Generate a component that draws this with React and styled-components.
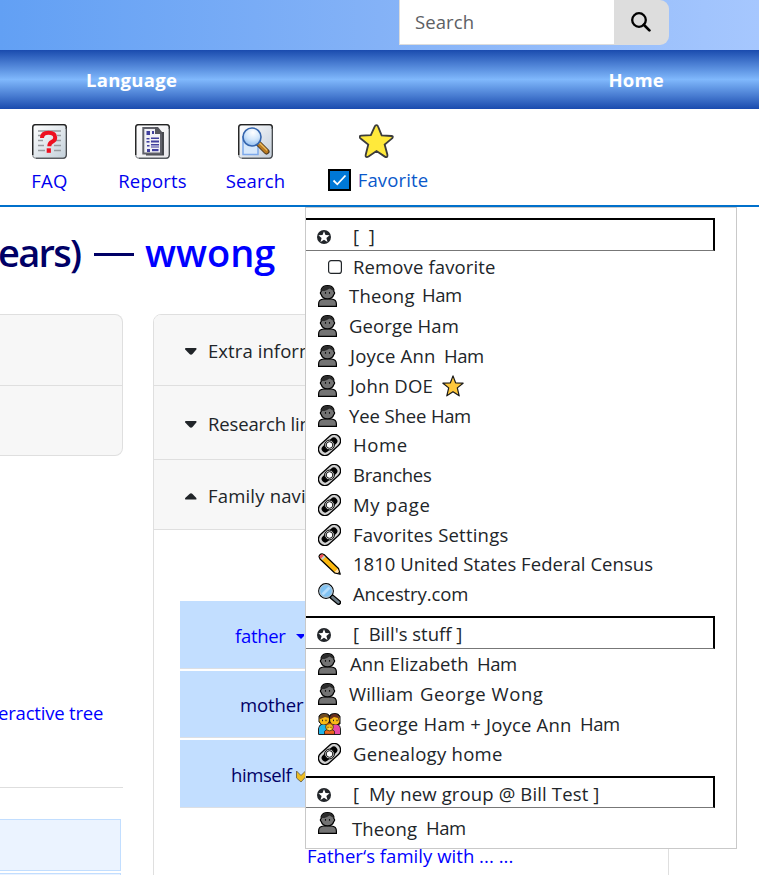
import React from 'react';
import styled, { createGlobalStyle } from 'styled-components';

const GlobalStyle = createGlobalStyle`
  * { box-sizing: border-box; }
  html, body { margin: 0; padding: 0; }
  body {
    height: 875px;
    overflow: hidden;
    background: #fff;
    color: #212529;
    font-family: "Open Sans", "Noto Sans", sans-serif;
    font-size: 18.5px;
    line-height: 28px;
    font-kerning: none;
  }
`;

const Page = styled.div`
  width: 759px;
  height: 875px;
  overflow: hidden;
  display: flex;
  flex-direction: column;
`;

/* ---------- header ---------- */
const Header = styled.header`
  height: 50px;
  flex: none;
  padding-left: 399px;
  background: linear-gradient(90deg, #62a0f4, #84b2f7 50%, #a6c7fe);
`;
const SearchForm = styled.form`
  display: flex;
  width: 270px;
  height: 45px;
`;
const SearchInput = styled.input`
  width: 215px;
  height: 45px;
  padding: 0 0 1px 15px;
  border: 1px solid #dcdcdc;
  border-top: 0;
  border-right: 0;
  outline: 0;
  background: #fff;
  font: inherit;
  letter-spacing: 0.1px;
  &::placeholder { color: #5d6064; opacity: 1; }
`;
const SearchButton = styled.button`
  width: 55px;
  height: 45px;
  padding: 0 1px 1px 0;
  border: 0;
  border-radius: 0 9px 9px 0;
  background: #ddd;
  display: flex;
  align-items: center;
  justify-content: center;
`;

/* ---------- primary navigation ---------- */
const PrimaryNav = styled.nav`
  height: 59px;
  flex: none;
  display: flex;
  justify-content: space-between;
  padding: 16px 95px 0 86px;
  background: linear-gradient(180deg, #1a4bae, #80b8fc 50%, #1a4bae);
`;
const NavLink = styled.a`
  color: #fff;
  font-weight: 700;
  letter-spacing: ${(p) => p.$ls || 0}px;
`;

/* ---------- icon menu ---------- */
const MenuBar = styled.nav`
  position: relative;
  height: 98px;
  flex: none;
  display: flex;
  padding: 15px 0 0 15px;
  border-bottom: 2px solid #0070cb;
`;
const MenuItem = styled.a`
  width: ${(p) => p.$w}px;
  margin-right: ${(p) => p.$gap || 0}px;
  display: flex;
  flex-direction: column;
  align-items: center;
  gap: 8px;
  color: #0000ee;
  letter-spacing: ${(p) => p.$ls || 0}px;
  > svg { flex: none; display: block; }
`;
const FavoriteLabel = styled.span`
  display: flex;
  align-items: center;
  color: #0a58ca;
  gap: 7px;
  letter-spacing: 0.14px;
  margin: -1px 0 0 3px;
  > svg { margin-top: -1px; }
`;

/* ---------- favorites dropdown ---------- */
const Dropdown = styled.div`
  position: absolute;
  left: 305px;
  top: 98px;
  width: 432px;
  height: 642px;
  padding-top: 10px;
  background: #fff;
  border: 1px solid #c9c9c9;
  z-index: 2;
`;
const GroupHeader = styled.div`
  width: 409px;
  height: ${(p) => p.$h || 33}px;
  margin-top: ${(p) => p.$mt || 0}px;
  padding: 2px 0 0 11px;
  display: flex;
  border-top: 2px solid #000;
  border-right: 2px solid #000;
  border-bottom: 1px solid #777;
  > svg { flex: none; margin: 8px 22px 0 0; }
`;
const GroupName = styled.span`
  white-space: pre;
  letter-spacing: ${(p) => p.$ls || 0}px;
`;
const Entry = styled.a`
  height: ${(p) => p.$h || 30}px;
  display: flex;
  padding-left: 12px;
  color: inherit;
  white-space: pre;
  > svg { flex: none; margin-top: 4px; }
`;
const RemoveEntry = styled.label`
  height: 30px;
  display: flex;
  padding: 2px 0 0 22px;
  gap: 11px;
  letter-spacing: 0.13px;
  > svg { flex: none; margin-top: 7px; }
`;
const Name = styled.span`
  flex: none;
  width: ${(p) => (p.$w ? p.$w + 'px' : 'auto')};
  margin-left: ${(p) => p.$ml || 0}px;
  padding-top: ${(p) => p.$drop ?? 1}px;
  letter-spacing: ${(p) => p.$ls || 0}px;
`;

/* ---------- page body ---------- */
const Main = styled.main`
  flex: 1;
  min-height: 0;
  display: flex;
  flex-direction: column;
`;
const Title = styled.h1`
  margin: 0 0 0 -2px;
  height: 107px;
  padding-top: 20px;
  display: flex;
  flex: none;
  font-size: 38px;
  font-weight: 600;
  line-height: 50px;
  color: #000066;
`;
const TitlePart = styled.span`
  width: ${(p) => p.$w}px;
  letter-spacing: ${(p) => p.$ls || 0}px;
`;
const TitleRule = styled.span`
  width: 40px;
  height: 3px;
  margin: 26px 11px 0 0;
  background: #000066;
`;
const TitleLink = styled.a`
  color: #0000ff;
`;
const Columns = styled.div`
  flex: 1;
  display: flex;
  align-items: flex-start;
  gap: 30px;
`;
const LeftColumn = styled.div`
  width: 123px;
  display: flex;
  flex-direction: column;
`;
const LeftCard = styled.div`
  height: 142px;
  border: 1px solid #dfdfdf;
  border-left: 0;
  border-radius: 0 8px 8px 0;
  background: #f7f7f7;
`;
const LeftCardRow = styled.div`
  height: 71px;
  border-bottom: 1px solid #dfdfdf;
`;
const TreeLink = styled.a`
  margin: 243px 0 0 -2px;
  color: #0000ff;
  letter-spacing: -0.19px;
`;
const Divider = styled.div`
  height: 1px;
  margin-top: 60px;
  background: #dedede;
`;
const FactBox = styled.div`
  width: 121px;
  height: 52px;
  margin-top: ${(p) => p.$mt}px;
  border: 1px solid #c2deff;
  border-left: 0;
  background: #ebf3ff;
`;
const RightCard = styled.div`
  width: 516px;
  height: 580px;
  border: 1px solid #dfdfdf;
  border-radius: 8px 8px 0 0;
  overflow: hidden;
`;
const AccordionRow = styled.div`
  height: ${(p) => p.$h}px;
  padding: ${(p) => p.$pt}px 0 0 30px;
  display: flex;
  gap: 10px;
  background: #f7f7f7;
  border-bottom: 1px solid #dfdfdf;
  letter-spacing: ${(p) => p.$ls || 0}px;
  > svg { flex: none; margin-top: 10px; }
`;
const AccordionLabel = styled.span`
  width: 97px;
  overflow: hidden;
  white-space: nowrap;
`;
const FamilyPanel = styled.div`
  padding: 71px 26px 0;
  display: flex;
  flex-direction: column;
  gap: 2px;
`;
const FamilyCell = styled.div`
  height: ${(p) => p.$h}px;
  padding: ${(p) => p.$pt}px 0 0 ${(p) => p.$pl}px;
  display: flex;
  background: #c2deff;
  border-bottom: 1px solid #dcdfe4;
  color: ${(p) => p.$color || '#000066'};
  letter-spacing: ${(p) => p.$ls || 0}px;
  > svg { flex: none; }
`;
const FamilyLink = styled.a`
  margin: 32px 0 0 127px;
  color: #0000ff;
  letter-spacing: 0.04px;
`;

/* ---------- drawings ---------- */
const Magnifier = () => (
  <svg width="20" height="20" viewBox="0 0 20 20" fill="none" stroke="#000">
    <circle cx="8" cy="8" r="6.800" strokeWidth="2.300" />
    <path d="M12.8 12.8 18.4 18.4" strokeWidth="2.700" strokeLinecap="round" />
  </svg>
);

const IconFrame = ({ id, tone, children }) => (
  <svg width="35" height="35" viewBox="0 0 35 35">
    <defs>
      <linearGradient id={id} x1="0" y1="0" x2="1" y2="1">
        <stop offset="0" stopColor="#fff" />
        <stop offset="1" stopColor={tone} />
      </linearGradient>
    </defs>
    <rect x=".8" y=".8" width="33.4" height="33.4" rx="3.2" fill={`url(#${id})`} stroke="#9a9da0" strokeWidth="1.4" />
    <path d="M34.3 5V3Q34 .7 32 .7H3Q1 .7.7 3v28" fill="none" stroke="#222" strokeWidth="1.3" />
    <path d="M34.4 4v27q-.4 3-3 3.3H4" fill="none" stroke="#44484d" strokeWidth="1.100" />
    {children}
  </svg>
);

const FaqIcon = () => (
  <IconFrame id="faq" tone="#c3d0da">
    <path d="M6 7h23M6 11.5h7M25 11.5h4M6 16.5h5M22 16.5h7M6 21.5h6M22 21.5h7M6 26.5h7M22 26.5h7" stroke="#969b9f" strokeWidth="1.3" />
    <path d="M10 14q0-5.200 6.500-5.200q6.700 0 6.700 4.600q0 2.900-3.200 4.500q-2.700 1.400-2.700 4.300" fill="none" stroke="#ee1020" strokeWidth="4" />
    <rect x="14.700" y="24.300" width="4.200" height="4.500" fill="#ee1020" />
  </IconFrame>
);

const ReportsIcon = () => (
  <IconFrame id="reports" tone="#e9e8ec">
    <path d="M11 30.500h17V8" fill="none" stroke="#46484e" strokeWidth="2" />
    <path d="M8.300 4H21l5 5v20.500H8.300z" fill="#f1f1f6" stroke="#60616a" strokeWidth="2" />
    <path d="M20 3h3l4 5v2h-7z" fill="#55565d" />
    <g fill="#403f9e">
      <rect x="11.500" y="7" width="3.500" height="4" />
      <rect x="17" y="7" width="2" height="3" />
      <rect x="11.500" y="14" width="3" height="1.400" />
      <rect x="16" y="13.500" width="8" height="1.500" />
      <rect x="11.500" y="17" width="3" height="1.600" />
      <rect x="16" y="16.500" width="8" height="2" />
      <rect x="16" y="20" width="8" height="1.500" />
      <rect x="12" y="21" width="2.500" height="1.500" />
      <rect x="16" y="22.500" width="8" height="1" />
      <rect x="12" y="25" width="3" height="3" />
      <rect x="17" y="25" width="6.500" height="2.200" />
    </g>
  </IconFrame>
);

const SearchIcon = () => (
  <IconFrame id="search" tone="#c3cedb">
    <path d="M5 12v18.500h15V18" fill="#d7e8fb" stroke="#7ea9ea" strokeWidth="1.500" />
    <path d="M20.500 19.500 28.500 27.500" stroke="#4d3a22" strokeWidth="6" strokeLinecap="round" />
    <path d="M20.700 19.600 28.300 27.200" stroke="#b97a21" strokeWidth="4.200" strokeLinecap="round" />
    <path d="M21.500 19 28.700 26" stroke="#ebbd62" strokeWidth="1.200" strokeLinecap="round" />
    <defs>
      <radialGradient id="lens" cx=".55" cy=".25" r=".8">
        <stop offset="0" stopColor="#fff" />
        <stop offset=".5" stopColor="#d3e7fb" />
        <stop offset="1" stopColor="#88b7ee" />
      </radialGradient>
    </defs>
    <circle cx="14" cy="13" r="9" fill="url(#lens)" stroke="#3565ad" strokeWidth="1.600" />
  </IconFrame>
);

const StarIcon = () => (
  <svg width="35" height="35" viewBox="0.500 0.500 36 36">
    <path
      d="M18.500 1.600q1.200 0 1.700 1.700l3.600 8.900 10.100.6q1.800.2 1.200 1.500-.2.700-1.200 1.500l-7 5.800 2.700 9.900q.4 2.400-.4 2.900-1 .4-2.500-.6l-8.200-5.500-8.200 5.600q-1.700 1-2.500.4-.8-.6-.2-2.900l2.400-9.700-7.500-6Q1 14.300 1.100 13.600q.2-1 1.800-1.100l9.800-.5 3.900-8.700q.7-1.700 1.900-1.700z"
      fill="#ffe93b"
      stroke="#3c3c3c"
      strokeWidth="1.900"
    />
  </svg>
);

const CheckedBox = () => (
  <svg width="23" height="22" viewBox="0 0 23 22">
    <rect x="1" y="1" width="21" height="20" fill="#0078d7" stroke="#000" strokeWidth="2" />
    <path d="M5.500 11.500 9.300 15.300 17.500 6.500" fill="none" stroke="#fff" strokeWidth="1.800" />
  </svg>
);

const EmptyBox = () => (
  <svg width="14" height="14" viewBox="0 0 14 14">
    <rect x=".6" y=".6" width="12.800" height="12.800" rx="2.500" fill="#fff" stroke="#212529" strokeWidth="1.200" />
  </svg>
);

const CircledStar = () => (
  <svg width="14" height="14" viewBox="0 0 14 14">
    <circle cx="7" cy="7" r="7" fill="#212529" />
    <path d="M7 1.300 8.500 5.100 12.600 5.300 9.400 7.900 10.500 12 7 9.700 3.500 12 4.600 7.900 1.400 5.300 5.500 5.100z" fill="#fff" />
  </svg>
);

const Person = () => (
  <svg width="19" height="22" viewBox="0 0 19 22">
    <path d="M.6 21.400V19q0-4.600 5-5h7.800q5 .4 5 5v2.400z" fill="#737373" stroke="#000" strokeWidth="1.200" />
    <path d="M7.500 12h4v2.500h-4z" fill="#737373" />
    <path d="M3.200 4.500Q4.500.6 9.500.6T15.800 4.500V6.500Q17.500 8 15.800 9.500 14.500 13.900 9.500 13.900T3.200 9.500Q1.500 8 3.200 6.500z" fill="#737373" stroke="#000" strokeWidth="1.200" />
    <path d="M3.300 6Q3.300 1 9.500 1 15.700 1 15.700 6L14 5 11.500 3.500 9 5 6.500 6z" fill="#2b2b2b" />
    <path d="M7.500 7v1.800M11.500 7v1.800" stroke="#111" strokeWidth="1.100" />
  </svg>
);

const LinkIcon = () => (
  <svg width="23" height="22" viewBox="0 0 23 22">
    <g transform="rotate(-42 11.500 11)">
      <rect x="-1.200" y="4.600" width="25.400" height="12.800" rx="6.400" fill="#d2d2d2" stroke="#000" strokeWidth="1.300" />
      <rect x="2.200" y="7.400" width="18.600" height="7.200" rx="3.600" fill="#000" />
    </g>
    <circle cx="11.500" cy="11" r="4.900" fill="#d2d2d2" stroke="#000" strokeWidth="1" />
    <circle cx="11.500" cy="11" r="3.300" fill="#fff" stroke="#000" strokeWidth=".9" />
  </svg>
);

const Pencil = () => (
  <svg width="23" height="22" viewBox="0 0 23 22">
    <path d="M1 3.500Q1.500 1 4 .8L6 1.500 20.500 15.500 22.200 21.200 16.500 19.800 2 6z" fill="#fcb910" stroke="#000" strokeWidth="1.200" strokeLinejoin="round" />
    <path d="M1.500 3.700Q2 1.400 4.200 1.200L5.800 2.500 3 5.500z" fill="#f04a62" />
    <path d="M3 5.700 6 2.500 7.500 4 4.500 7z" fill="#c4cbd1" />
    <path d="M16.500 19 19.800 15.700 21.300 20.500z" fill="#ffe1b8" />
    <path d="M19.500 20.300 21.300 18.400 22.500 21.500z" fill="#111" />
  </svg>
);

const Lens = () => (
  <svg width="23" height="22" viewBox="0 0 23 22">
    <path d="M13.500 13.500 20.700 19.500" stroke="#000" strokeWidth="5" strokeLinecap="round" />
    <path d="M14.500 14.200 20.400 19.200" stroke="#6e7d87" strokeWidth="2.800" strokeLinecap="round" />
    <circle cx="8" cy="8" r="7.300" fill="#80c2f2" stroke="#000" strokeWidth="1.200" />
    <circle cx="8" cy="8" r="6.300" fill="none" stroke="#bcc5cb" strokeWidth="1" />
    <path d="M3.500 10.500 10.500 3.500 12.500 5.500 5.500 12.500z" fill="#b5dcfb" />
  </svg>
);

const Family = () => (
  <svg width="23" height="22" viewBox="0 0 23 22">
    <path d="M.6 21.400V16Q1 12 3.500 11.200L1 9V3Q2 .5 6 .5T11.500 2.500Q13 .5 17 .5T22 3.500V11L20 11.500Q22.400 13 22.400 16V21.400z" fill="#111" stroke="#111" strokeWidth="1" />
    <path d="M1 21v-5q0-4 4-4.500l4 1V21z" fill="#21b5e9" />
    <path d="M22 21v-5q0-4-4-4.500l-4 1V21z" fill="#e94aa4" />
    <circle cx="6.200" cy="6.700" r="4.900" fill="#f9ba16" />
    <circle cx="17" cy="6.700" r="4.900" fill="#f9ba16" />
    <path d="M1.200 6.500Q1 1 6.300.8 11 1 10.900 5L7 4z" fill="#714c20" />
    <path d="M11.800 6Q12 1 17 .8 22 1 21.800 11L20 5 16 4 13 6z" fill="#6a311f" />
    <path d="M4.500 6.700v1.500M8 6.700v1.500M15.500 6.700v1.500M19 6.700v1.500" stroke="#222" />
    <path d="M6.500 21.300v-3q1.500-2 5-2t5 2v3z" fill="#ed681c" stroke="#111" strokeWidth=".7" />
    <circle cx="11.500" cy="14" r="3.900" fill="#f9ba16" stroke="#222" strokeWidth=".7" />
    <path d="M8 12.500Q9 9.500 11.500 9.700 14.500 9.500 15 12.500L12 11z" fill="#a14a17" />
    <path d="M10 13.800v1M13 13.800v1" stroke="#222" strokeWidth=".8" />
    <path d="M10.300 16h2.500" stroke="#fff" strokeWidth=".8" />
  </svg>
);

const InlineStar = styled.svg.attrs({ width: 22, height: 22, viewBox: '0 0 22 22' })`
  margin-left: 9px;
`;
const Caret = ({ up }) => (
  <svg width="14" height="9" viewBox="0 0 14 9">
    <path d={up ? 'M2 7.500Q.2 7.500 1.200 6L5.500 2Q7 .6 8.500 2L12.300 6Q13 7.500 12 7.500z' : 'M2 1Q.2 1 1.200 2.500L5.500 7Q7 8.400 8.500 7L12.300 2.500Q13 1 12 1z'} fill="#212529" />
  </svg>
);

function Favorites() {
  return (
    <Dropdown>
      <GroupHeader><CircledStar /><GroupName>[  ]</GroupName></GroupHeader>
      <RemoveEntry><EmptyBox />Remove favorite</RemoveEntry>
      <Entry><Person /><Name $ml={12} $w={73} $drop={1} $ls={0.2}>Theong</Name><Name $drop={0} $ls={-0.4}>Ham</Name></Entry>
      <Entry><Person /><Name $ml={12} $ls={0.12}>George Ham</Name></Entry>
      <Entry><Person /><Name $ml={13} $w={94} $ls={0.19}>Joyce Ann</Name><Name $ls={-0.4}>Ham</Name></Entry>
      <Entry>
        <Person /><Name $ml={13} $ls={0.15}>John DOE</Name>
        <InlineStar>
          <path d="M11 .9 13.600 7.800 21.100 8.200 15.300 12.900 17.200 20.800 11 16.700 4.800 20.800 6.700 12.900.9 8.200 8.400 7.800z" fill="#ffc83d" stroke="#1a1a1a" strokeWidth="1.200" strokeLinejoin="round" />
        </InlineStar>
      </Entry>
      <Entry $h={29}><Person /><Name $ml={12} $w={82} $ls={-0.11}>Yee Shee</Name><Name $ls={-0.4}>Ham</Name></Entry>
      <Entry><LinkIcon /><Name $ml={12} $ls={0.6}>Home</Name></Entry>
      <Entry><LinkIcon /><Name $ml={12} $ls={-0.25}>Branches</Name></Entry>
      <Entry><LinkIcon /><Name $ml={12} $ls={0.7}>My page</Name></Entry>
      <Entry $h={29}><LinkIcon /><Name $ml={12} $ls={0.21}>Favorites Settings</Name></Entry>
      <Entry><Pencil /><Name $ml={12} $ls={0.04}>1810 United States Federal Census</Name></Entry>
      <Entry><Lens /><Name $ml={12} $ls={-0.1}>Ancestry.com</Name></Entry>
      <GroupHeader $mt={7}><CircledStar /><GroupName>[  Bill's stuff ]</GroupName></GroupHeader>
      <Entry><Person /><Name $ml={13} $w={127} $ls={0.1}>Ann Elizabeth</Name><Name $ls={-0.4}>Ham</Name></Entry>
      <Entry><Person /><Name $ml={12} $w={71} $ls={0.16}>William</Name><Name $ls={0.55}>George Wong</Name></Entry>
      <Entry><Family /><Name $ml={13} $w={132} $ls={0.25}>George Ham +</Name><Name $w={94} $drop={2} $ls={0.19}>Joyce Ann</Name><Name $ls={-0.4}>Ham</Name></Entry>
      <Entry><LinkIcon /><Name $ml={12} $ls={0.28}>Genealogy home</Name></Entry>
      <GroupHeader $mt={7} $h={32}><CircledStar /><GroupName $ls={0.14}>[  My new group @ Bill Test ]</GroupName></GroupHeader>
      <Entry $h={39}><Person /><Name $ml={15} $w={74} $drop={7} $ls={0.12}>Theong</Name><Name $drop={6} $ls={-0.4}>Ham</Name></Entry>
    </Dropdown>
  );
}

export default function App() {
  return (
    <Page>
      <GlobalStyle />
      <Header>
        <SearchForm>
          <SearchInput placeholder="Search" />
          <SearchButton type="button"><Magnifier /></SearchButton>
        </SearchForm>
      </Header>
      <PrimaryNav>
        <NavLink $ls={0.28}>Language</NavLink>
        <NavLink $ls={0.2}>Home</NavLink>
      </PrimaryNav>
      <MenuBar>
        <MenuItem $w={69} $gap={34} $ls={0.3}><FaqIcon />FAQ</MenuItem>
        <MenuItem $w={69} $gap={34} $ls={0.2}><ReportsIcon />Reports</MenuItem>
        <MenuItem $w={69} $gap={38} $ls={0.15}><SearchIcon />Search</MenuItem>
        <MenuItem $w={97}>
          <StarIcon />
          <FavoriteLabel><CheckedBox />Favorite</FavoriteLabel>
        </MenuItem>
        <Favorites />
      </MenuBar>
      <Main>
        <Title>
          <TitlePart $w={96} $ls={-1.7}>ears)</TitlePart>
          <TitleRule />
          <TitleLink>wwong</TitleLink>
        </Title>
        <Columns>
          <LeftColumn>
            <LeftCard><LeftCardRow /></LeftCard>
            <TreeLink>eractive tree</TreeLink>
            <Divider />
            <FactBox $mt={31} />
            <FactBox $mt={2} />
          </LeftColumn>
          <RightCard>
            <AccordionRow $h={71} $pt={22} $ls={0.08}><Caret /><AccordionLabel>Extra information</AccordionLabel></AccordionRow>
            <AccordionRow $h={74} $pt={24} $ls={-0.15}><Caret /><AccordionLabel>Research links</AccordionLabel></AccordionRow>
            <AccordionRow $h={70} $pt={22} $ls={0.18}><Caret up /><AccordionLabel>Family navigator</AccordionLabel></AccordionRow>
            <FamilyPanel>
              <FamilyCell $h={68} $pt={21} $pl={55} $ls={-0.3} $color="#0000ff">
                father
                <svg width="18" height="28" viewBox="0 0 18 28"><path d="M10 12h10L15 17z" fill="#0000ff" /></svg>
              </FamilyCell>
              <FamilyCell $h={67} $pt={20} $pl={60} $ls={-0.1}>mother</FamilyCell>
              <FamilyCell $h={68} $pt={21} $pl={51} $ls={-0.4}>
                himself
                <svg width="18" height="28" viewBox="0 0 18 28">
                  <path d="M5.500 10 10 14.500 14.500 10V16L10 21 5.500 17z" fill="#edbd22" stroke="#766d50" strokeWidth="1" />
                </svg>
              </FamilyCell>
              <FamilyLink>Father‘s family with ... ...</FamilyLink>
            </FamilyPanel>
          </RightCard>
        </Columns>
      </Main>
    </Page>
  );
}
